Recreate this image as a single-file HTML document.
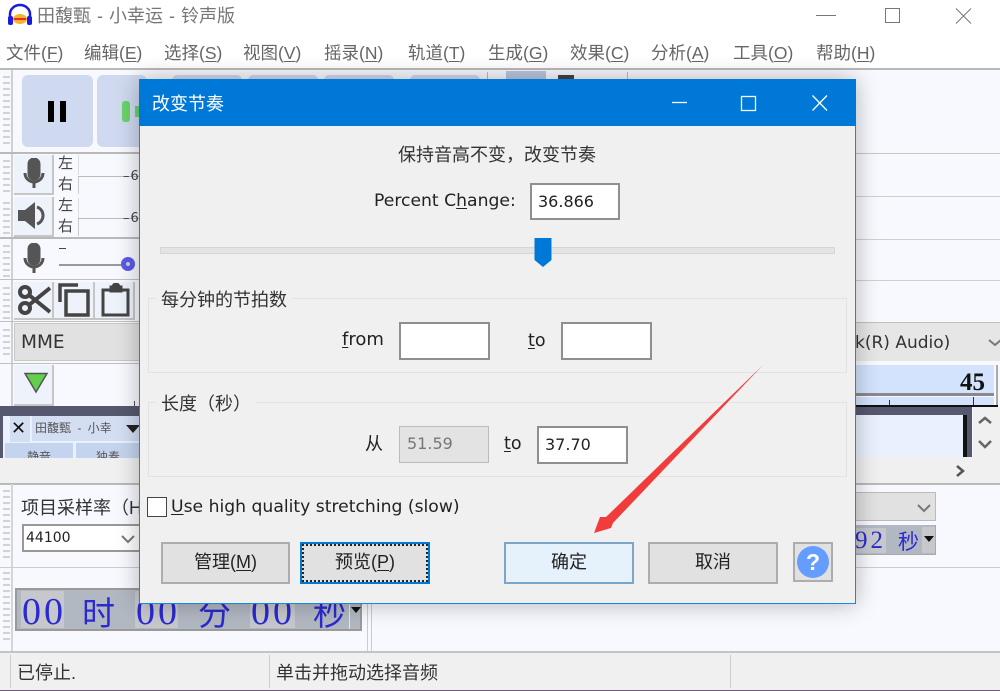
<!DOCTYPE html>
<html><head><meta charset="utf-8"><style>
html,body{margin:0;padding:0;width:1000px;height:691px;overflow:hidden;background:#f7f9fe}
body{position:relative;font-family:"DejaVu Sans","Noto Sans CJK SC",sans-serif;color:#333}
.a{position:absolute;box-sizing:border-box;white-space:nowrap}
.h{background:#b9b9b9;height:2px}
.u{text-decoration:underline;text-underline-offset:2px}
.menu{top:43px;font-size:17.500px;line-height:21px;color:#666;font-family:"Liberation Sans","Noto Sans CJK SC",sans-serif}
.grip{left:3px;width:7px;background:repeating-linear-gradient(#d2d2d2 0 2px,#f7f9fe 2px 6px)}
.tb{background:#cfd9ef;border-radius:6px}
.ib{background:#eef2fb;border-right:2px solid #c6c6c6;border-bottom:2px solid #c6c6c6}
.lr{font-size:15px;color:#444;left:58px;line-height:18px;font-family:"Liberation Sans","Noto Sans CJK SC",sans-serif}
.clk{font-family:"Liberation Serif",serif;color:#2a2ad0;font-size:38px;line-height:44px;letter-spacing:3px}
.clc{font-family:"Noto Sans CJK SC",sans-serif;color:#2a2ad0;font-size:33px;line-height:44px}
.cell{top:591px;height:37px;background:#c6c8cc}
.btn{border:2px solid #adadad;background:#e1e1e1;text-align:center;font-size:18px;line-height:37px;color:#222;font-family:"Liberation Sans","Noto Sans CJK SC",sans-serif}
.dt{font-size:17.200px;color:#222;line-height:20px}
.in{border:2px solid #8f8f8f;background:#fff;font-size:16px;color:#222;padding-left:6px;line-height:33px}
.grp{border:1px solid #e2e2e2;left:148px;width:699px}
.gt{left:156px;padding:0 5px;background:#f0f0f0;font-family:"Liberation Sans","Noto Sans CJK SC",sans-serif;font-size:18px;line-height:22px;color:#333}
</style></head><body>
<div class="a" style="left:0;top:0;width:1000px;height:69px;background:#fff"></div>
<svg class="a" style="left:7px;top:3px" width="26" height="22" viewBox="0 0 26 22"><path d="M3 15V11a10 9 0 0 1 20 0v4" fill="none" stroke="#1a1ae0" stroke-width="2.500"/><rect x="1" y="13" width="5" height="9" rx="2" fill="#1a1ae0"/><rect x="20" y="13" width="5" height="9" rx="2" fill="#1a1ae0"/><ellipse cx="13" cy="16" rx="7" ry="5" fill="#f7b32b"/><rect x="7" y="15" width="12" height="2" fill="#e8302a"/></svg>
<div class="a" style="left:37px;top:5px;font-size:18px;word-spacing:1px;line-height:22px;color:#777;font-family:'Liberation Sans','Noto Sans CJK SC',sans-serif">田馥甄 - 小幸运 - 铃声版</div>
<svg class="a" style="left:810px;top:0" width="180" height="30" fill="none" stroke="#777"><path d="M6 15.500H26"/><rect x="75.500" y="8.500" width="14" height="14"/><path d="M146 8.500L161 23.500M161 8.500L146 23.500"/></svg>
<div class="a menu" style="left:6px">文件(<span class="u">F</span>)</div>
<div class="a menu" style="left:84px">编辑(<span class="u">E</span>)</div>
<div class="a menu" style="left:164px">选择(<span class="u">S</span>)</div>
<div class="a menu" style="left:243px">视图(<span class="u">V</span>)</div>
<div class="a menu" style="left:324px">摇录(<span class="u">N</span>)</div>
<div class="a menu" style="left:408px">轨道(<span class="u">T</span>)</div>
<div class="a menu" style="left:488px">生成(<span class="u">G</span>)</div>
<div class="a menu" style="left:570px">效果(<span class="u">C</span>)</div>
<div class="a menu" style="left:651px">分析(<span class="u">A</span>)</div>
<div class="a menu" style="left:733px">工具(<span class="u">O</span>)</div>
<div class="a menu" style="left:816px">帮助(<span class="u">H</span>)</div>

<div class="a h" style="left:0;top:68px;width:1000px"></div>
<div class="a" style="left:11px;top:70px;width:2px;height:340px;background:#d0d0d0"></div>
<div class="a grip" style="top:76px;height:72px"></div>
<div class="a tb" style="left:22px;top:75px;width:71px;height:72px"></div>
<div class="a" style="left:48px;top:101px;width:6px;height:21px;background:#000"></div>
<div class="a" style="left:60px;top:101px;width:6px;height:21px;background:#000"></div>
<div class="a tb" style="left:97px;top:75px;width:50px;height:72px"></div>
<div class="a" style="left:122px;top:101px;width:8px;height:21px;border-radius:3px;background:#6bd36b"></div>
<div class="a" style="left:135px;top:106px;width:5px;height:11px;background:#6bd36b"></div>
<div class="a tb" style="left:172px;top:75px;width:70px;height:10px"></div>
<div class="a tb" style="left:248px;top:75px;width:70px;height:10px"></div>
<div class="a tb" style="left:324px;top:75px;width:70px;height:10px"></div>
<div class="a tb" style="left:410px;top:75px;width:70px;height:10px"></div>
<div class="a" style="left:506px;top:71px;width:40px;height:10px;background:#b9c6de"></div>
<div class="a" style="left:558px;top:75px;width:16px;height:5px;background:#444"></div>
<div class="a" style="left:487px;top:72px;width:1px;height:10px;background:#bbb"></div>
<div class="a" style="left:627px;top:72px;width:1px;height:10px;background:#bbb"></div>
<div class="a" style="left:855px;top:153px;width:145px;height:1px;background:#c8c8c8"></div>
<div class="a" style="left:855px;top:196px;width:145px;height:1px;background:#d0d0d0"></div>
<div class="a" style="left:855px;top:239px;width:145px;height:1px;background:#d0d0d0"></div>
<div class="a" style="left:855px;top:280px;width:145px;height:1px;background:#d0d0d0"></div>
<div class="a" style="left:855px;top:322px;width:145px;height:1px;background:#c0c0c0"></div>

<div class="a h" style="left:0;top:152px;width:140px"></div>
<div class="a grip" style="top:160px;height:32px"></div>
<div class="a grip" style="top:202px;height:32px"></div>
<div class="a grip" style="top:245px;height:32px"></div>
<div class="a grip" style="top:287px;height:32px"></div>
<div class="a grip" style="top:329px;height:30px"></div>
<div class="a ib" style="left:14px;top:155px;width:40px;height:40px"></div>
<div class="a ib" style="left:14px;top:197px;width:40px;height:40px"></div>
<svg class="a" style="left:20px;top:158px" width="28" height="34" fill="none" stroke="#555" stroke-width="3"><rect x="9" y="1" width="10" height="20" rx="5" fill="#555"/><path d="M5 15a9 9 0 0 0 18 0M14 24v6"/></svg>
<svg class="a" style="left:16px;top:199px" width="32" height="34"><path d="M2 11h7l10-8v27l-10-8H2z" fill="#555"/><path d="M21 8a9 9 0 0 1 0 17" fill="none" stroke="#555" stroke-width="3"/></svg>
<div class="a lr" style="top:155px">左</div><div class="a lr" style="top:176px">右</div>
<div class="a lr" style="top:197px">左</div><div class="a lr" style="top:218px">右</div>
<div class="a" style="left:78px;top:176px;width:62px;height:1px;background:#bbb"></div>
<div class="a" style="left:78px;top:155px;width:1px;height:20px;background:#ddd"></div>
<div class="a" style="left:78px;top:177px;width:1px;height:17px;background:#ccc"></div>
<div class="a" style="left:78px;top:218px;width:62px;height:1px;background:#bbb"></div>
<div class="a" style="left:78px;top:198px;width:1px;height:20px;background:#ddd"></div>
<div class="a" style="left:78px;top:219px;width:1px;height:17px;background:#ccc"></div>
<div class="a" style="left:123px;top:170px;width:17px;font-size:13px;line-height:14px;color:#444;overflow:hidden">–<span style="margin-left:1px">6</span></div>
<div class="a" style="left:123px;top:212px;width:17px;font-size:13px;line-height:14px;color:#444;overflow:hidden">–<span style="margin-left:1px">6</span></div>
<svg class="a" style="left:20px;top:243px" width="28" height="34" fill="none" stroke="#555" stroke-width="3"><rect x="9" y="1" width="10" height="20" rx="5" fill="#555"/><path d="M5 15a9 9 0 0 0 18 0M14 24v6"/></svg>
<div class="a" style="left:59px;top:248px;width:7px;height:1px;background:#444"></div>
<div class="a" style="left:59px;top:264px;width:70px;height:2px;background:#999"></div>
<div class="a" style="left:121px;top:257px;width:14px;height:14px;border-radius:50%;background:#5a5ae6;border:4px solid #5a5ae6"></div>
<div class="a" style="left:126px;top:262px;width:4px;height:4px;border-radius:50%;background:#ccd"></div>
<div class="a h" style="left:0;top:237px;width:140px"></div>
<div class="a" style="left:0;top:279px;width:140px;height:1px;background:#c0c0c0"></div>
<div class="a" style="left:0;top:321px;width:140px;height:1px;background:#c0c0c0"></div>
<div class="a" style="left:0;top:363px;width:140px;height:1px;background:#c0c0c0"></div>
<div class="a ib" style="left:14px;top:282px;width:40px;height:38px"></div>
<div class="a ib" style="left:54px;top:282px;width:41px;height:38px"></div>
<div class="a ib" style="left:95px;top:282px;width:40px;height:38px"></div>
<svg class="a" style="left:17px;top:283px" width="36" height="34" fill="none" stroke="#444" stroke-width="4"><circle cx="8" cy="9" r="5"/><circle cx="8" cy="25" r="5"/><path d="M12 12L33 29M12 22L33 5"/></svg>
<svg class="a" style="left:58px;top:282px" width="34" height="36" fill="none" stroke="#444" stroke-width="3.500"><path d="M2 20V3h18"/><rect x="8" y="9" width="22" height="24"/></svg>
<svg class="a" style="left:100px;top:283px" width="32" height="34" fill="none" stroke="#444" stroke-width="3"><rect x="3" y="7" width="25" height="25"/><path d="M11 8V4h2a3 3 0 0 1 6 0h2v4z" fill="#444"/></svg>
<div class="a" style="left:14px;top:323px;width:126px;height:38px;background:#e1e1e1;border:1px solid #c8c8c8;font-family:'DejaVu Sans';font-size:18.500px;line-height:38px;padding-left:6px;color:#333">MME</div>
<div class="a" style="left:855px;top:323px;width:145px;height:38px;background:#e6e6e6;font-size:17px;line-height:40px;color:#333">k(R) Audio)</div>
<svg class="a" style="left:988px;top:338px" width="12" height="10" fill="none" stroke="#777" stroke-width="2"><path d="M1 2l6 5 6-5"/></svg>
<div class="a ib" style="left:14px;top:365px;width:40px;height:41px"></div>
<svg class="a" style="left:23px;top:372px" width="26" height="22"><path d="M2 1.500H24L13 20z" fill="#63cf4f" stroke="#555" stroke-width="1.500"/></svg>
<div class="a" style="left:134px;top:401px;width:1px;height:6px;background:#555"></div>
<div class="a" style="left:855px;top:365px;width:139px;height:28px;background:#d3e2fd"></div>
<div class="a" style="left:855px;top:397px;width:139px;height:8px;background:#d3e2fd"></div>
<div class="a" style="left:855px;top:393px;width:139px;height:3px;background:#8a8a8a"></div>
<div class="a" style="left:996px;top:365px;width:2px;height:41px;background:#aaa"></div>
<div class="a" style="left:960px;top:369px;font:bold 25px/28px 'Liberation Serif',serif;color:#111">45</div>
<div class="a" style="left:889px;top:400px;width:1px;height:6px;background:#333"></div>
<div class="a" style="left:973px;top:397px;width:1px;height:9px;background:#333"></div>
<div class="a" style="left:0;top:406px;width:140px;height:52px;background:#56586f"></div>
<div class="a" style="left:973px;top:407px;width:27px;height:50px;background:#f0f0f0"></div>
<div class="a" style="left:855px;top:407px;width:117px;height:9px;background:#56586f"></div>
<div class="a" style="left:855px;top:405px;width:143px;height:2px;background:#111"></div>
<div class="a" style="left:855px;top:415px;width:108px;height:42px;background:#e9f0fe"></div>
<div class="a" style="left:963px;top:415px;width:4px;height:42px;background:#111"></div>
<div class="a" style="left:967px;top:415px;width:5px;height:42px;background:#56586f"></div>
<svg class="a" style="left:977px;top:414px" width="16" height="42" fill="none" stroke="#666" stroke-width="2.500"><path d="M2 9l6-5 6 5M2 27l6 6 6-6"/></svg>
<div class="a" style="left:3px;top:416px;width:137px;height:42px;background:#e9f0fe"></div>
<div class="a" style="left:10px;top:416px;width:20px;height:26px;background:#d3def3"></div>
<div class="a" style="left:11px;top:420px;font-size:18px;line-height:18px;color:#111">✕</div>
<div class="a" style="left:32px;top:416px;width:108px;height:25px;background:#d3def3;font-family:'Liberation Sans','Noto Sans CJK SC',sans-serif;font-size:12px;word-spacing:3px;line-height:25px;color:#555;padding-left:3px;overflow:hidden">田馥甄 - 小幸</div>
<div class="a" style="left:126px;top:425px;border-top:8px solid #222;border-left:7px solid transparent;border-right:7px solid transparent"></div>
<div class="a" style="left:5px;top:443px;width:68px;height:15px;background:#c5d4ee;font-family:'Noto Sans CJK SC';font-size:12px;line-height:28px;text-align:center;color:#555;overflow:hidden">静音</div>
<div class="a" style="left:76px;top:443px;width:64px;height:15px;background:#c5d4ee;font-family:'Noto Sans CJK SC';font-size:12px;line-height:28px;text-align:center;color:#555;overflow:hidden">独奏</div>
<div class="a" style="left:0;top:458px;width:140px;height:25px;background:#f0f0f0"></div>
<div class="a" style="left:855px;top:457px;width:145px;height:26px;background:#f0f0f0"></div>
<svg class="a" style="left:955px;top:465px" width="12" height="13" fill="none" stroke="#555" stroke-width="2.500"><path d="M2 1l6 5-6 5"/></svg>
<div class="a h" style="left:0;top:483px;width:140px"></div>
<div class="a h" style="left:855px;top:483px;width:145px"></div>

<div class="a grip" style="top:490px;height:72px"></div>
<div class="a" style="left:11px;top:484px;width:2px;height:170px;background:#d5d5d5"></div>
<div class="a" style="left:21px;top:497px;font-family:'Liberation Sans','Noto Sans CJK SC',sans-serif;font-size:18px;line-height:22px;color:#333;width:119px;overflow:hidden">项目采样率（H</div>
<div class="a" style="left:22px;top:524px;width:118px;height:28px;background:#fff;border:2px solid #999;border-right:0;font-size:14px;line-height:24px;padding-left:2px;color:#222;font-family:'DejaVu Sans'">44100</div>
<svg class="a" style="left:120px;top:534px" width="16" height="10" fill="none" stroke="#777" stroke-width="2"><path d="M2 2l6 6 6-6"/></svg>
<div class="a" style="left:0;top:567px;width:140px;height:1px;background:#ccc"></div>
<div class="a grip" style="top:572px;height:72px"></div>

<div class="a" style="left:15px;top:588px;width:347px;height:43px;background:#b2b8c2;border:2px solid #9a9a9a"></div>
<div class="a cell" style="left:21px;width:43px"></div>
<div class="a cell" style="left:135px;width:43px"></div>
<div class="a cell" style="left:250px;width:45px"></div>
<div class="a clk" style="left:22px;top:590px">00</div>
<div class="a clc" style="left:82px;top:589px">时</div>
<div class="a clk" style="left:136px;top:590px">00</div>
<div class="a clc" style="left:198px;top:589px">分</div>
<div class="a clk" style="left:251px;top:590px">00</div>
<div class="a clc" style="left:313px;top:589px">秒</div>
<div class="a" style="left:349px;top:590px;width:1px;height:39px;background:#e8e8e8"></div>
<div class="a" style="left:351px;top:607px;border-top:6px solid #111;border-left:5px solid transparent;border-right:5px solid transparent"></div>

<div class="a" style="left:855px;top:492px;width:81px;height:29px;background:#e1e1e1;border:1px solid #bbb;border-left:0"></div>
<svg class="a" style="left:916px;top:503px" width="16" height="10" fill="none" stroke="#777" stroke-width="2"><path d="M2 2l6 6 6-6"/></svg>
<div class="a" style="left:855px;top:525px;width:81px;height:30px;background:#b2b8c2;border-bottom:1px solid #aaa;border-right:1px solid #aaa"></div>
<div class="a" style="left:855px;top:528px;width:31px;height:25px;background:#c6c8cc"></div>
<div class="a" style="left:922px;top:527px;width:13px;height:26px;background:#c6c8cc"></div>
<div class="a" style="left:924px;top:536px;border-top:6px solid #111;border-left:5px solid transparent;border-right:5px solid transparent"></div>
<div class="a" style="left:855px;top:528px;font:25px/26px 'Liberation Serif',serif;color:#2a2ad0;letter-spacing:3px">92</div>
<div class="a" style="left:898px;top:528px;font:21px/26px 'Noto Sans CJK SC',sans-serif;color:#2a2ad0">秒</div>
<div class="a" style="left:855px;top:567px;width:145px;height:1px;background:#ccc"></div>

<div class="a" style="left:367px;top:483px;width:1px;height:168px;background:#ccc"></div>
<div class="a" style="left:371px;top:483px;width:1px;height:168px;background:#ccc"></div>
<div class="a" style="left:0;top:651px;width:1000px;height:2px;background:#c4c4c4"></div>
<div class="a" style="left:0;top:653px;width:1000px;height:37px;background:#f0f0f0"></div>
<div class="a" style="left:10px;top:655px;width:1px;height:33px;background:#ccc"></div>
<div class="a" style="left:269px;top:655px;width:1px;height:33px;background:#ccc"></div>
<div class="a" style="left:730px;top:655px;width:1px;height:33px;background:#ccc"></div>
<div class="a" style="left:17px;top:662px;font-family:'Liberation Sans','Noto Sans CJK SC',sans-serif;font-size:18px;line-height:22px;color:#333">已停止.</div>
<div class="a" style="left:276px;top:662px;font-family:'Liberation Sans','Noto Sans CJK SC',sans-serif;font-size:18px;line-height:22px;color:#333">单击并拖动选择音频</div>
<div class="a" style="left:0;top:690px;width:1000px;height:1px;background:#6a5a78"></div>

<!-- dialog -->
<div class="a" style="left:139px;top:79px;width:717px;height:525px;background:#f0f0f0;border:1px solid #1a86e0;box-shadow:0 0 22px rgba(0,0,0,.28)"></div>
<div class="a" style="left:139px;top:79px;width:717px;height:47px;background:#0078d7"></div>
<div class="a" style="left:152px;top:92px;font-family:'Liberation Sans','Noto Sans CJK SC',sans-serif;font-size:18px;line-height:24px;color:#fff">改变节奏</div>
<svg class="a" style="left:660px;top:90px" width="180" height="26" fill="none" stroke="#fff" stroke-width="1.300"><path d="M12 12.500H27"/><rect x="81.500" y="6.500" width="14" height="14"/><path d="M152.500 5.500L167 20.500M167 5.500L152.500 20.500"/></svg>
<div class="a" style="left:398px;top:144px;font-family:'Liberation Sans','Noto Sans CJK SC',sans-serif;font-size:18px;line-height:22px;color:#333">保持音高不变，改变节奏</div>
<div class="a dt" style="left:374px;top:191px;font-size:17.200px">Percent C<span class="u">h</span>ange:</div>
<div class="a in" style="left:530px;top:183px;width:90px;height:37px">36.866</div>
<div class="a" style="left:160px;top:247px;width:675px;height:7px;background:#e4e4e4;border:1px solid #d6d6d6"></div>
<svg class="a" style="left:534px;top:238px" width="18" height="30"><path d="M0.500 0H17.500V22L9 29 0.500 22z" fill="#0078d7"/></svg>
<div class="a grp" style="top:298px;height:75px"></div>
<div class="a gt" style="top:289px">每分钟的节拍数</div>
<div class="a dt" style="left:342px;top:330px;font-size:18px"><span class="u">f</span>rom</div>
<div class="a in" style="left:399px;top:322px;width:91px;height:38px"></div>
<div class="a dt" style="left:528px;top:331px;font-size:17.500px"><span class="u">t</span>o</div>
<div class="a in" style="left:561px;top:322px;width:91px;height:38px"></div>
<div class="a grp" style="top:402px;height:75px"></div>
<div class="a gt" style="top:393px">长度（秒）</div>
<div class="a dt" style="left:365px;top:434px;font-family:'Liberation Sans','Noto Sans CJK SC',sans-serif;font-size:18px">从</div>
<div class="a in" style="left:399px;top:426px;width:90px;height:37px;background:#e3e3e3;border:1px solid #bcbcbc;color:#777;padding-left:7px;line-height:33px">51.59</div>
<div class="a dt" style="left:504px;top:434px;font-size:17.500px"><span class="u">t</span>o</div>
<div class="a in" style="left:537px;top:426px;width:91px;height:38px">37.70</div>
<div class="a" style="left:147px;top:497px;width:20px;height:20px;background:#fff;border:1px solid #444"></div>
<div class="a dt" style="left:171px;top:497px;font-size:17.200px"><span class="u">U</span>se high quality stretching (slow)</div>
<div class="a btn" style="left:161px;top:542px;width:129px;height:42px">管理(<span class="u">M</span>)</div>
<div class="a btn" style="left:300px;top:542px;width:130px;height:42px;border:2px solid #0078d7;outline:2px dotted #222;outline-offset:-4px">预览(<span class="u">P</span>)</div>
<div class="a btn" style="left:504px;top:542px;width:130px;height:42px;border-color:#7ba6c9;background:#e5f1fb">确定</div>
<div class="a btn" style="left:648px;top:542px;width:130px;height:42px">取消</div>
<div class="a" style="left:793px;top:542px;width:40px;height:40px;background:#e1e1e1;border:2px solid #adadad"></div>
<div class="a" style="left:797px;top:546px;width:32px;height:32px;border-radius:50%;background:#659dff;color:#fff;font:bold 23px/32px 'Liberation Sans',sans-serif;text-align:center">?</div>
<svg class="a" style="left:590px;top:360px" width="180" height="180"><path d="M173 5L23 163 21 168 4 173 10 157 16 157z" fill="#f23c3c"/></svg>
</body></html>
